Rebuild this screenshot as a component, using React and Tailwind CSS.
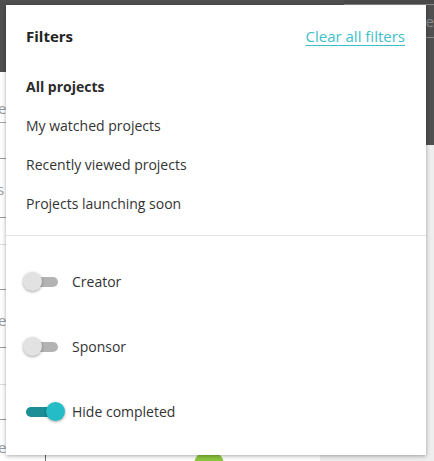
import React from "react";

function Toggle({ on }) {
  return (
    <div className="relative w-[46px] h-[20px] flex items-center">
      <div
        className={
          "ml-[3px] h-[10px] w-[32px] rounded-full " +
          (on ? "bg-[#1b8e96]" : "bg-[#b3b3b3]")
        }
      />
      <div
        className={
          "absolute top-[0.5px] h-[19px] w-[19px] rounded-full shadow-[0_1px_3px_rgba(0,0,0,0.35)] " +
          (on ? "left-[23px] bg-[#24bdc7]" : "left-0 bg-[#e2e2e2]")
        }
      />
    </div>
  );
}

function BgRow({ h, border, children, className = "" }) {
  return (
    <div
      className={"relative shrink-0 border-b " + border + " " + className}
      style={{ height: h }}
    >
      {children}
    </div>
  );
}

export default function App() {
  return (
    <div className="relative w-[434px] h-[461px] overflow-hidden font-['Open_Sans',sans-serif] bg-[#eeeeee]">
      {/* background page */}
      <div className="flex h-full w-full">
        <div className="w-[321px] flex flex-col bg-white">
          <div className="h-[72px] shrink-0 bg-[#4f4f4f]" />
          <BgRow h={51} border="border-[#a8a8a8]">
            <div className="pt-[26px] -ml-[2px] text-[15px] leading-[20px] text-[#9a9a9a]">e</div>
          </BgRow>
          <BgRow h={36} border="border-[#999]" />
          <BgRow h={59} border="border-[#999]">
            <div className="pt-[20px] -ml-[3px] text-[15px] leading-[20px] text-[#9a9a9a]">s</div>
          </BgRow>
          <BgRow h={27} border="border-[#ddd]" />
          <BgRow h={45} border="border-[#999]" />
          <BgRow h={58} border="border-[#999]">
            <div className="pt-[20px] -ml-[2px] text-[15px] leading-[20px] text-[#9a9a9a]">e</div>
          </BgRow>
          <BgRow h={37} border="border-[#ddd]" />
          <BgRow h={35} border="border-[#999]" />
          <div className="flex-1 flex">
            <div className="w-[47px] pt-[17px] -ml-[2px] text-[15px] leading-[20px] text-[#9a9a9a]">e</div>
            <div className="w-[147px] border-l border-[#666] mt-[35px]" />
            <div className="mt-[30px] ml-[2px] h-[30px] w-[30px] rounded-full bg-[#8cc63f]" />
          </div>
        </div>
        <div className="flex-1 flex flex-col">
          <div className="h-[145px] bg-[#505050] flex flex-col">
            <div className="h-[5px] bg-[#4a4a4a] border-b border-[#8a8a8a] ml-[24px]" />
            <div className="h-[33px] border-b border-[#8a8a8a] pt-[6px] pl-[106px] text-[15px] leading-[20px] text-[#8c8c8c]">
              e
            </div>
          </div>
          <div className="flex-1 bg-[#eeeeee]" />
        </div>
      </div>

      {/* filters popover */}
      <div className="absolute left-[6px] top-[5px] w-[420px] h-[450px] bg-white shadow-[0_1px_4px_rgba(0,0,0,0.35)] pt-[12px] flex flex-col">
        <div className="h-[39px] px-[20px] pr-[21px] flex items-center justify-between">
          <span className="text-[15px] font-bold text-[#222]">Filters</span>
          <span className="text-[15px] text-[#3cbfc9] underline underline-offset-[3px]">
            Clear all filters
          </span>
        </div>
        <div className="mt-[11px] flex flex-col px-[20px] text-[14px] text-[#333]">
          <div className="h-[39px] flex items-center font-bold text-[#2b2b2b]">All projects</div>
          <div className="h-[39px] flex items-center">My watched projects</div>
          <div className="h-[39px] flex items-center">Recently viewed projects</div>
          <div className="h-[39px] flex items-center">Projects launching soon</div>
        </div>
        <div className="mt-[12px] h-px bg-[#e2e2e2]" />
        <div className="pt-[13px] flex flex-col text-[14px] text-[#333]">
          {[
            ["Creator", false],
            ["Sponsor", false],
            ["Hide completed", true],
          ].map(([label, on]) => (
            <div key={label} className="h-[65px] flex items-center pl-[17px]">
              <Toggle on={on} />
              <span className="ml-[3px]">{label}</span>
            </div>
          ))}
        </div>
      </div>
    </div>
  );
}
